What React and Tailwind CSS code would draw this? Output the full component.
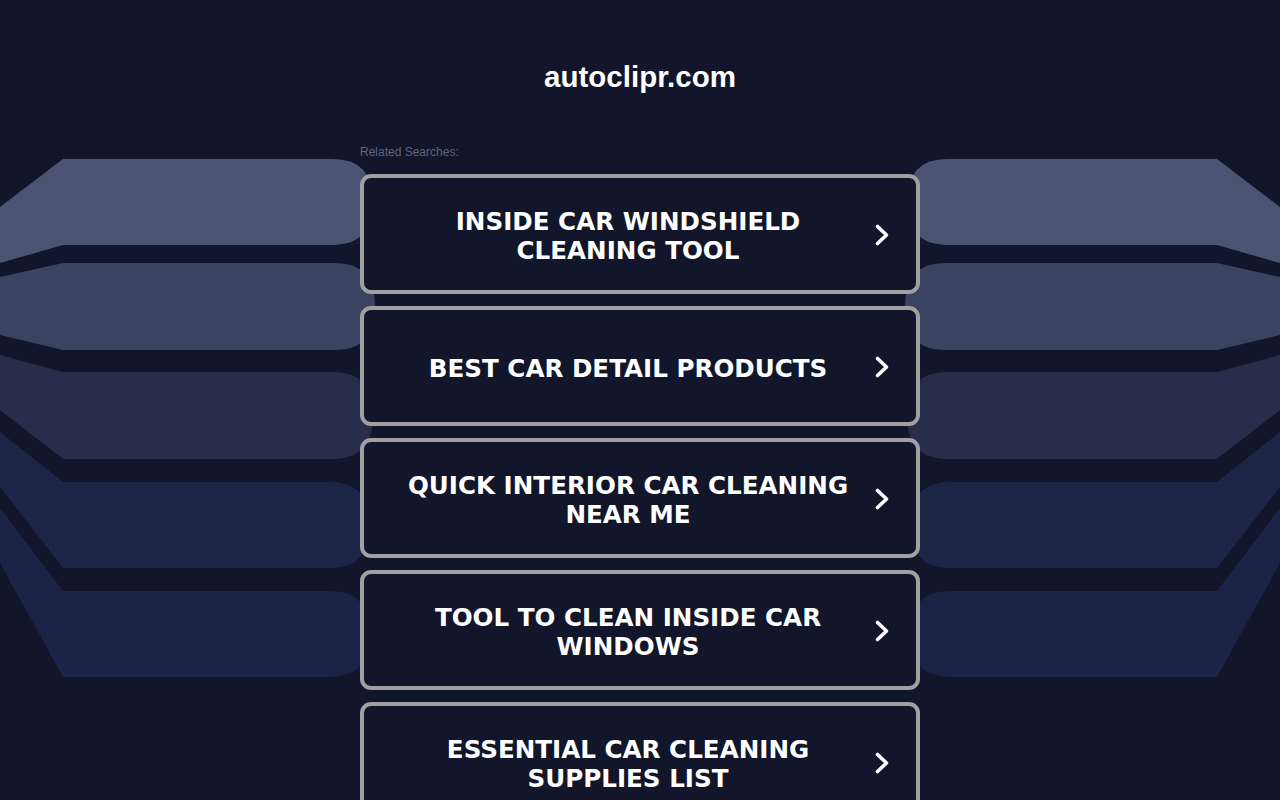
import React from 'react';

const searches = [
    'Inside Car Windshield Cleaning Tool',
    'Best Car Detail Products',
    'Quick Interior Car Cleaning Near Me',
    'Tool to Clean Inside Car Windows',
    'Essential Car Cleaning Supplies List',
];

// left-hand bands; the right side is the same drawing mirrored
const bands = [
    { d: 'M63 159 L333 159 Q373 159 373 202 Q373 245 333 245 L63 245 L0 263 L0 207 Z', fill: '#4b5573' },
    { d: 'M63 263 L335 263 Q375 263 375 306 Q375 350 335 350 L63 350 L0 335 L0 277 Z', fill: '#3a4361' },
    { d: 'M63 372 L333 372 Q373 372 373 415 Q373 459 333 459 L63 459 L0 410 L0 355 Z', fill: '#262e4c' },
    { d: 'M63 482 L330 482 Q370 482 370 525 Q370 568 330 568 L63 568 L0 487 L0 432 Z', fill: '#1d2647', dots: true },
    { d: 'M63 591 L330 591 Q370 591 370 634 Q370 677 330 677 L63 677 L0 563 L0 508 Z', fill: '#1b2446', dots: true },
];

function Backdrop() {
    const shapes = bands.map((b, i) => (
        <g key={i}>
            <path d={b.d} fill={b.fill} />
            {b.dots && <path d={b.d} fill="url(#dots)" />}
        </g>
    ));
    return (
        <svg className="absolute top-0 left-0" width="1280" height="800" viewBox="0 0 1280 800">
            <defs>
                <pattern id="dots" width="4" height="4" patternUnits="userSpaceOnUse">
                    <circle cx="1.5" cy="1.5" r="0.6" fill="#131a36" opacity="0.7" />
                </pattern>
            </defs>
            <g>{shapes}</g>
            <g transform="translate(1280,0) scale(-1,1)">{shapes}</g>
        </svg>
    );
}

function Chevron() {
    return (
        <svg width="16" height="24" viewBox="0 0 16 24" className="shrink-0 ml-[18px] mt-[2px]">
            <path d="M3.5 3.5 L12.5 12 L3.5 20.5" fill="none" stroke="#ffffff" strokeWidth="3.6" strokeLinecap="round" strokeLinejoin="round" />
        </svg>
    );
}

export default function App() {
    return (
        <div className="relative w-full h-[800px] overflow-hidden bg-[#11162b]">
            <Backdrop />
            <div className="relative w-[560px] mx-auto">
                <h1 className="mt-[58px] h-[38px] leading-[38px] text-center text-white font-bold text-[29.5px] font-['Liberation_Sans',Arial,sans-serif]">
                    autoclipr.com
                </h1>
                <p className="mt-[50px] text-[12px] leading-[13px] text-[#5e657c] font-['Liberation_Sans',Arial,sans-serif]">
                    Related Searches:
                </p>
                <div className="mt-[15px] flex flex-col gap-[12px]">
                    {searches.map((s) => (
                        <a
                            key={s}
                            href="#"
                            className="flex items-center h-[120px] border-[4px] border-[#a0a0a0] rounded-[11px] bg-[#11162b] pl-[36px] pr-[26px]"
                        >
                            <span className="flex-1 pt-[4px] text-center text-white uppercase font-bold text-[24.6px] leading-[29px] font-['DejaVu_Sans',Verdana,sans-serif]">
                                {s}
                            </span>
                            <Chevron />
                        </a>
                    ))}
                </div>
            </div>
        </div>
    );
}
